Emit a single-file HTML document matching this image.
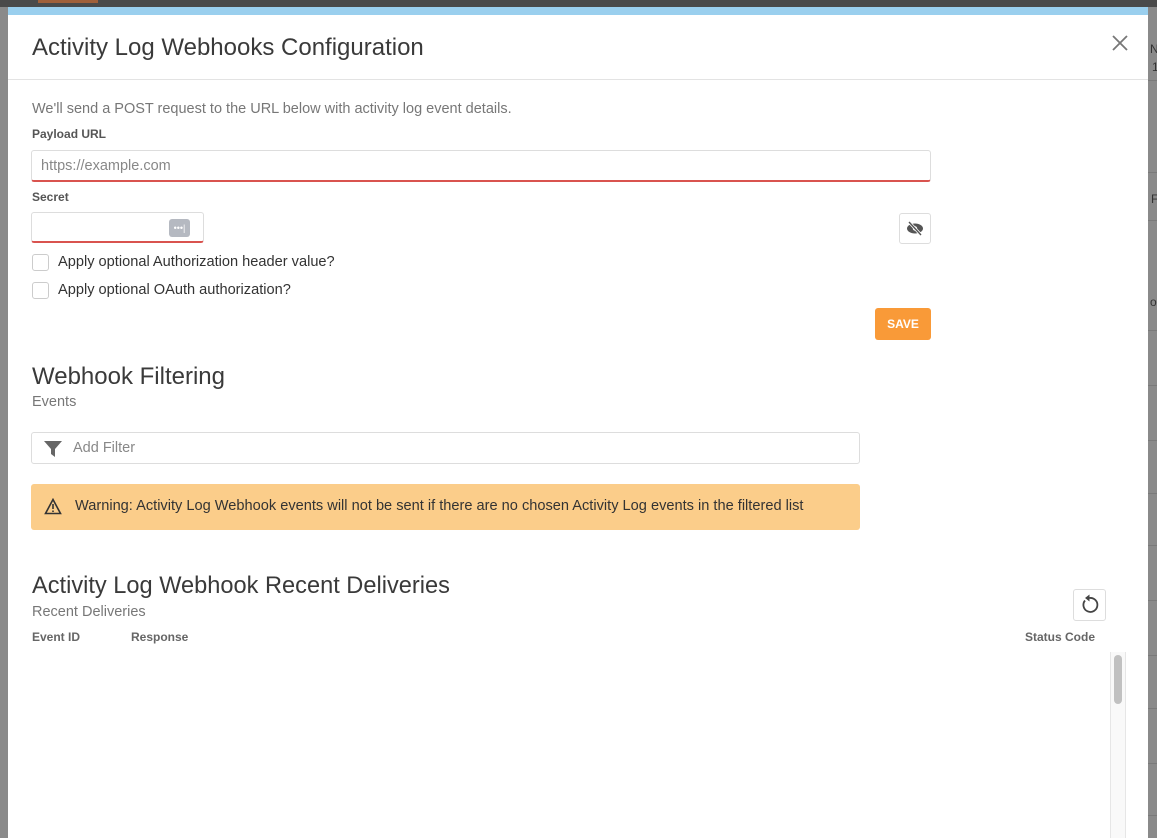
<!DOCTYPE html>
<html><head><meta charset="utf-8"><style>
*{box-sizing:border-box;margin:0;padding:0}
body{width:1157px;height:838px;overflow:hidden;background:#8a8a8a;font-family:"Liberation Sans",sans-serif;position:relative;color:#333}
.a{position:absolute}
.bg-top{left:0;top:0;width:1157px;height:7px;background:#4a4a4a}
.bg-top2{left:38px;top:0;width:60px;height:3px;background:#a0603a}
.modal{left:8px;top:7px;width:1140px;height:831px;background:#fff;overflow:hidden}
.bar{left:0;top:0;width:1140px;height:8px;background:#9acfee}
.hdr{left:0;top:72px;width:1140px;height:1px;background:#e3e3e3}
.t1{left:24px;top:27px;font-size:24px;color:#3a3a3a}
.sm{font-size:14.5px;color:#777}
.lbl{font-size:12px;color:#555;font-weight:bold}
.inp{border:1px solid #ddd;border-radius:3px;background:#fff}
.red{border-bottom:2px solid #d9534f}
.cb{width:17px;height:17px;border:1px solid #ccc;border-radius:3px}
.ct{font-size:14.6px;color:#333}
.rl{font-size:12px;color:#666;font-weight:bold}
.side{font-size:12px;color:#333}
.line{left:1148px;width:9px;height:1px;background:#7a7a7a}
</style></head><body>
<div class="a bg-top"></div><div class="a bg-top2"></div>
<div class="a side" style="left:1150px;top:42px">N</div>
<div class="a side" style="left:1152px;top:60px">1</div>
<div class="a line" style="top:80px"></div>
<div class="a line" style="top:172px"></div>
<div class="a side" style="left:1151px;top:192px">F</div>
<div class="a line" style="top:220px"></div>
<div class="a side" style="left:1150px;top:295px">o</div>
<div class="a line" style="top:330px"></div>
<div class="a line" style="top:385px"></div>
<div class="a line" style="top:440px"></div>
<div class="a line" style="top:493px"></div>
<div class="a line" style="top:545px"></div>
<div class="a line" style="top:600px"></div>
<div class="a line" style="top:655px"></div>
<div class="a line" style="top:708px"></div>
<div class="a line" style="top:763px"></div>
<div class="a line" style="top:815px"></div>
<div class="a modal">
 <div class="a bar"></div>
 <div class="a t1">Activity Log Webhooks Configuration</div>
 <svg class="a" style="left:1104px;top:28px" width="16" height="16" viewBox="0 0 16 16"><path d="M1 1L15 15M15 1L1 15" stroke="#777" stroke-width="1.8"/></svg>
 <div class="a hdr"></div>
 <div class="a sm" style="left:24px;top:94px">We'll send a POST request to the URL below with activity log event details.</div>
 <div class="a lbl" style="left:24px;top:120px">Payload URL</div>
 <div class="a inp red" style="left:23px;top:143px;width:900px;height:32px;padding:7px 9px;font-size:14.5px;color:#888">https://example.com</div>
 <div class="a lbl" style="left:24px;top:183px">Secret</div>
 <div class="a inp red" style="left:23px;top:205px;width:173px;height:31px"></div>
 <div class="a" style="left:161px;top:212px;width:21px;height:18px;background:#b5b9c1;border-radius:3px;color:#fff;font-size:9px;text-align:center;line-height:18px">•••|</div>
 <div class="a inp" style="left:891px;top:206px;width:32px;height:31px"><svg width="30" height="29" viewBox="0 0 30 29"><ellipse cx="15" cy="14.5" rx="8" ry="5" fill="#555"/><circle cx="15" cy="14.5" r="2.2" fill="#fff"/><line x1="9" y1="8" x2="21" y2="21" stroke="#fff" stroke-width="3"/><line x1="9" y1="8" x2="21" y2="21" stroke="#555" stroke-width="1.4"/></svg></div>
 <div class="a cb" style="left:24px;top:247px"></div>
 <div class="a ct" style="left:50px;top:247px">Apply optional Authorization header value?</div>
 <div class="a cb" style="left:24px;top:275px"></div>
 <div class="a ct" style="left:50px;top:275px">Apply optional OAuth authorization?</div>
 <div class="a" style="left:867px;top:301px;width:56px;height:32px;background:#f99a38;border-radius:3px;color:#fff;font-size:12px;font-weight:bold;text-align:center;line-height:32px">SAVE</div>
 <div class="a" style="left:24px;top:356px;font-size:24px;color:#3a3a3a">Webhook Filtering</div>
 <div class="a sm" style="left:24px;top:387px">Events</div>
 <div class="a inp" style="left:23px;top:425px;width:829px;height:32px"><svg class="a" style="left:11px;top:7px" width="20" height="18" viewBox="0 0 20 18"><path d="M1 1h18l-7 8v8l-4-3V9z" fill="#666"/></svg><div class="a" style="left:41px;top:7px;font-size:14.5px;color:#888">Add Filter</div></div>
 <div class="a" style="left:23px;top:477px;width:829px;height:46px;background:#fbcd8a;border-radius:3px"><svg class="a" style="left:13px;top:14px" width="18" height="17" viewBox="0 0 18 17"><path d="M9 1.5L16.5 15.5H1.5Z" fill="none" stroke="#333" stroke-width="1.6"/><path d="M9 6v5M9 12.5v1.5" stroke="#333" stroke-width="1.6"/></svg><div class="a" style="left:44px;top:14px;font-size:14.6px;color:#333">Warning: Activity Log Webhook events will not be sent if there are no chosen Activity Log events in the filtered list</div></div>
 <div class="a" style="left:24px;top:566px;font-size:23.6px;color:#3a3a3a">Activity Log Webhook Recent Deliveries</div>
 <div class="a sm" style="left:24px;top:597px">Recent Deliveries</div>
 <div class="a inp" style="left:1065px;top:582px;width:33px;height:32px"><svg width="31" height="30" viewBox="0 0 31 30"><path d="M11 10.5 A7 7 0 1 0 15.5 8" fill="none" stroke="#444" stroke-width="1.8"/><path d="M15.5 4.5v7l-4.5-3.5z" fill="#444"/></svg></div>
 <div class="a rl" style="left:24px;top:623px">Event ID</div>
 <div class="a rl" style="left:123px;top:623px">Response</div>
 <div class="a rl" style="left:1017px;top:623px">Status Code</div>
 <div class="a" style="left:1102px;top:645px;width:16px;height:200px;background:#f9f9f9;border-left:1px solid #e6e6e6;border-right:1px solid #e6e6e6"></div>
 <div class="a" style="left:1106px;top:648px;width:8px;height:49px;background:#c1c1c1;border-radius:4px"></div>
</div>
</body></html>
